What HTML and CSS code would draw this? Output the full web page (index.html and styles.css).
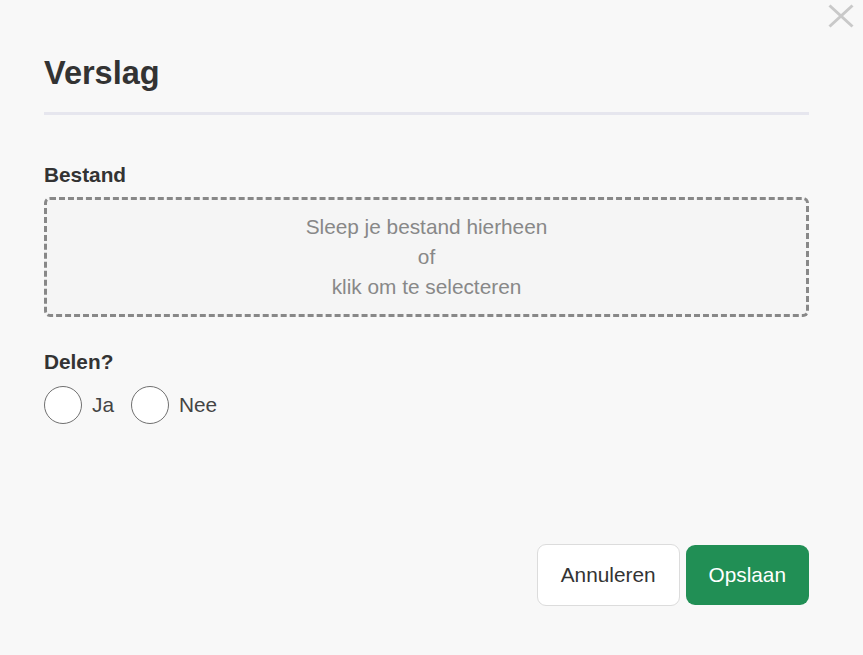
FILE: index.html
```html
<!DOCTYPE html>
<html lang="nl">
<head>
<meta charset="utf-8">
<title>Verslag</title>
<link rel="stylesheet" href="styles.css">
</head>
<body>
<div class="dialog">
  <button class="close" aria-label="Sluiten">
    <svg width="26" height="24" viewBox="0 0 26 24"><path d="M1.5 1.5 L24.5 22.5 M24.5 1.5 L1.5 22.5" stroke="#c9c9c9" stroke-width="3" fill="none"/></svg>
  </button>
  <h1 class="title">Verslag</h1>
  <div class="divider"></div>
  <div class="field-label">Bestand</div>
  <div class="dropzone">
    <div>Sleep je bestand hierheen</div>
    <div>of</div>
    <div>klik om te selecteren</div>
  </div>
  <div class="field-label share-label">Delen?</div>
  <div class="radios">
    <label class="radio"><span class="circle"></span><span>Ja</span></label>
    <label class="radio"><span class="circle"></span><span>Nee</span></label>
  </div>
  <div class="footer">
    <button class="btn btn-cancel">Annuleren</button>
    <button class="btn btn-save">Opslaan</button>
  </div>
</div>
</body>
</html>
```
FILE: styles.css
```css
html, body {
  margin: 0;
  padding: 0;
  background: #f8f8f8;
  font-family: "Liberation Sans", Arial, sans-serif;
  color: #333;
}
.dialog {
  position: relative;
  box-sizing: border-box;
  min-height: 655px;
  padding: 0 54px 49px 44px;
  display: flex;
  flex-direction: column;
}
.close {
  position: absolute;
  top: 4px;
  right: 9px;
  border: 0;
  background: none;
  padding: 0;
  line-height: 0;
}
.title {
  margin: 53px 0 19px;
  font-size: 32.5px;
  line-height: 40px;
  font-weight: 700;
  color: #333;
}
.divider {
  height: 3px;
  background: #e6e6ee;
  margin-bottom: 48px;
}
.field-label {
  font-size: 20.8px;
  line-height: 24px;
  font-weight: 700;
  color: #333;
}
.dropzone {
  margin-top: 10px;
  border: 3px dashed #888;
  border-radius: 6px;
  background: #f5f5f5;
  padding: 12px 0;
  text-align: center;
  color: #888;
  font-size: 20.8px;
  line-height: 30px;
}
.share-label {
  margin-top: 33px;
}
.radios {
  display: flex;
  margin-top: 12px;
  gap: 17px;
}
.radio {
  display: flex;
  align-items: center;
  gap: 10px;
  font-size: 20.8px;
  color: #444;
}
.circle {
  box-sizing: border-box;
  width: 38px;
  height: 38px;
  border: 1.5px solid #707070;
  border-radius: 50%;
  background: #fff;
}
.footer {
  margin-top: auto;
  display: flex;
  justify-content: flex-end;
  align-items: center;
  gap: 6px;
}
.btn {
  font-family: "Liberation Sans", Arial, sans-serif;
  font-size: 20.8px;
  border-radius: 9px;
  padding: 0 23px;
  cursor: pointer;
}
.btn-cancel {
  height: 62px;
  background: #fff;
  border: 1px solid #dcdcdc;
  color: #333;
}
.btn-save {
  height: 60px;
  background: #218f55;
  border: 0;
  color: #fff;
}
```
